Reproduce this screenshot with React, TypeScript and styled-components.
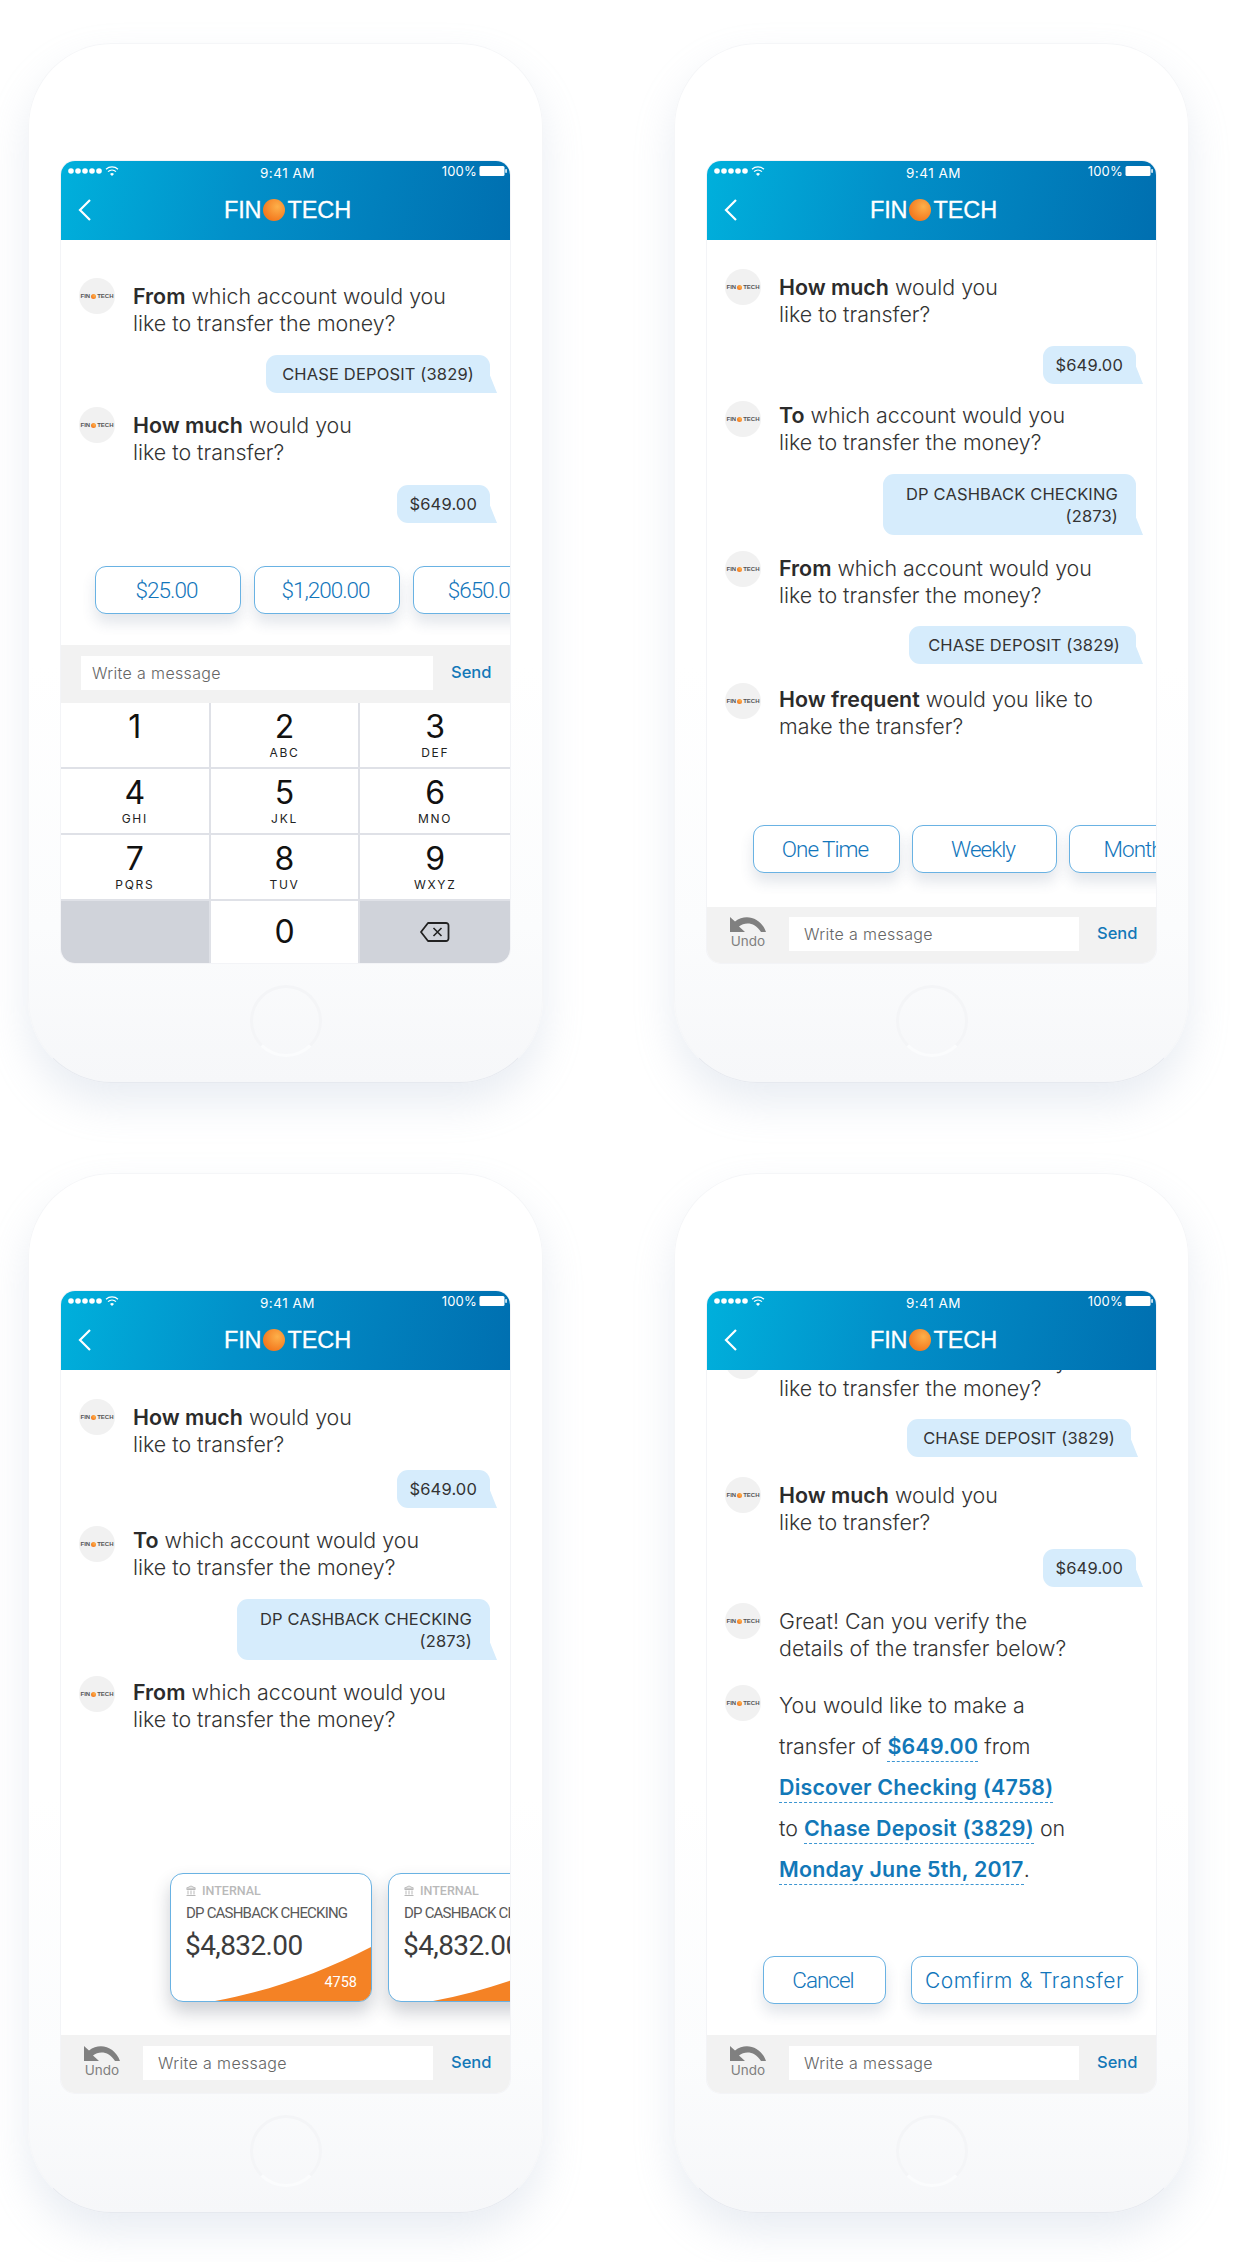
import React from "react";
import styled, { createGlobalStyle } from "styled-components";

const Global = createGlobalStyle`
  html, body { margin: 0; padding: 0; background: #fff; }
  body { font-family: Inter, "Noto Sans", sans-serif; color: #333; }
  * { box-sizing: border-box; }
`;

const Page = styled.main`
  width: 1242px;
  height: 2262px;
  padding: 43px 0 0 28px;
  display: grid;
  grid-template-columns: 515px 515px;
  grid-auto-rows: 1040px;
  column-gap: 131px;
  row-gap: 90px;
  overflow: hidden;
`;

const Phone = styled.article`
  width: 515px;
  height: 1040px;
  padding: 117px 32px 0;
  border-radius: 84px;
  background: linear-gradient(#fff 0, #fff 60%, #fbfcfd 85%, #f6f7f9 100%);
  border: 1px solid #f5f6f8;
  border-bottom-color: #e6e9ef;
  box-shadow: 0 20px 40px rgba(165, 178, 205, 0.24);
  display: flex;
  flex-direction: column;
  align-items: stretch;
`;

const Screen = styled.section`
  height: 802px;
  flex: none;
  border-radius: 14px;
  overflow: hidden;
  background: #fff;
  display: flex;
  flex-direction: column;
  box-shadow: 0 0 0 1px #f3f4f7;
`;

const HomeButton = styled.div`
  width: 72px;
  height: 72px;
  margin: 22px auto 0;
  border-radius: 50%;
  border: 3px solid #f4f5f7;
  border-bottom-color: #fbfcfd;
`;

const Header = styled.header`
  height: 79px;
  flex: none;
  color: #fff;
  background: linear-gradient(102deg, #00b0dc 0%, #0290c9 40%, #006fb0 100%);
  padding: 0 3px 0 7px;
`;

const StatusBar = styled.div`
  height: 24px;
  display: grid;
  grid-template-columns: 1fr auto 1fr;
  align-items: center;
  font-size: 13.5px;
  letter-spacing: 0.5px;
`;

const StatusLeft = styled.div`
  display: flex;
  align-items: center;
  padding-bottom: 4px;
`;

const StatusRight = styled.div`
  display: flex;
  align-items: center;
  justify-content: flex-end;
  gap: 2px;
  padding-bottom: 4px;
  font-size: 13px;
  letter-spacing: 0.2px;
`;

const TitleRow = styled.div`
  height: 50px;
  display: grid;
  grid-template-columns: 1fr auto 1fr;
  align-items: center;
`;

const BackLink = styled.div`
  padding-left: 9px;
  display: flex;
  align-items: center;
`;

const Brand = styled.div<{ $small?: boolean }>`
  display: flex;
  align-items: center;
  font-family: "Liberation Sans", Arial, sans-serif;
  font-size: ${(p) => (p.$small ? "6px" : "23.5px")};
  font-weight: ${(p) => (p.$small ? 700 : 400)};
  color: ${(p) => (p.$small ? "#555" : "#fff")};
  letter-spacing: ${(p) => (p.$small ? "0" : "-0.1px")};
  -webkit-text-stroke: ${(p) => (p.$small ? "0" : "0.3px #fff")};
`;

const Sphere = styled.span<{ $small?: boolean }>`
  width: ${(p) => (p.$small ? "5px" : "22px")};
  height: ${(p) => (p.$small ? "5px" : "22px")};
  margin: 0 ${(p) => (p.$small ? "1px" : "2px")};
  border-radius: 50%;
  background: radial-gradient(circle at 65% 35%, #fdb04a, #f47b20 70%);
`;

const Chat = styled.div`
  flex: 1;
  min-height: 0;
  overflow: hidden;
  display: flex;
  flex-direction: column;
`;

const Thread = styled.div<{ $top: number }>`
  margin-top: ${(p) => p.$top}px;
  flex: none;
  display: flex;
  flex-direction: column;
`;

const Message = styled.div<{ $gap?: number }>`
  display: flex;
  align-items: flex-start;
  padding-left: 18px;
  margin-top: ${(p) => p.$gap ?? 0}px;
`;

const Avatar = styled.div`
  width: 36px;
  height: 36px;
  flex: none;
  border-radius: 50%;
  background: #f1f1f1;
  display: flex;
  align-items: center;
  justify-content: center;
`;

const MessageText = styled.p<{ $pad?: number }>`
  margin: 0 0 0 18px;
  padding-top: ${(p) => p.$pad ?? 5}px;
  font-size: 21.4px;
  line-height: 27px;
  font-weight: 300;
  color: #333;
  b { font-weight: 600; color: #2b2b2b; }
`;

const SummaryText = styled.p`
  margin: 0 0 0 18px;
  font-size: 21.4px;
  line-height: 41px;
  font-weight: 300;
  color: #333;
`;

const Detail = styled.span`
  font-weight: 600;
  letter-spacing: 0.2px;
  color: #1278b8;
  padding-bottom: 2px;
  border-bottom: 1.5px dashed #3c96d2;
`;

const Bubble = styled.div<{ $gap: number; $pad?: number; $wide?: boolean; $inset?: number }>`
  position: relative;
  align-self: flex-end;
  margin-top: ${(p) => p.$gap}px;
  margin-right: ${(p) => p.$inset ?? 20}px;
  padding: ${(p) => (p.$wide ? "9px 18px 8px 23px" : `0 ${Math.min(p.$pad ?? 16, 16)}px 0 ${p.$pad ?? 16}px`)};
  min-height: 38px;
  display: flex;
  align-items: center;
  text-align: right;
  background: #d6ecfc;
  border-radius: 11px 11px 0 11px;
  font-size: 16.5px;
  line-height: 22px;
  letter-spacing: 0.15px;
  color: #333;
  &::after {
    content: "";
    position: absolute;
    right: -7px;
    bottom: 0;
    width: 8px;
    height: 20px;
    background: #d6ecfc;
    clip-path: polygon(0 0, 100% 100%, 0 100%);
  }
`;

const Actions = styled.div<{ $left: number; $bottom: number; $gap: number }>`
  margin-top: auto;
  flex: none;
  display: flex;
  gap: ${(p) => p.$gap}px;
  padding: 0 0 ${(p) => p.$bottom}px ${(p) => p.$left}px;
`;

const Option = styled.button<{ $width: number; $loose?: boolean }>`
  width: ${(p) => p.$width}px;
  height: 48px;
  flex: none;
  background: #fff;
  border: 1.5px solid #69b2e3;
  border-radius: 11px;
  box-shadow: 0 9px 14px rgba(60, 80, 110, 0.14);
  font-family: ${(p) => (p.$loose ? "Inter" : "Roboto")}, sans-serif;
  font-size: ${(p) => (p.$loose ? "21px" : "22.5px")};
  font-weight: 300;
  letter-spacing: ${(p) => (p.$loose ? "0.5px" : "-1px")};
  color: #1276bb;
  padding: 0 ${(p) => (p.$loose ? "0" : "3px")} 0 0;
  white-space: nowrap;
  overflow: hidden;
`;

const AccountCard = styled.div`
  position: relative;
  width: 202px;
  height: 129px;
  flex: none;
  padding: 9px 15px 0;
  border: 1.5px solid #69b2e3;
  border-radius: 13px;
  background: #fff;
  overflow: hidden;
  font-family: Roboto, sans-serif;
  box-shadow: 0 10px 18px rgba(40, 50, 70, 0.24);
`;

const CardKind = styled.div`
  display: flex;
  align-items: center;
  gap: 6px;
  font-size: 12.5px;
  font-weight: 500;
  color: #b9b9b9;
  line-height: 16px;
`;

const CardName = styled.div`
  margin-top: 4px;
  font-size: 15px;
  line-height: 20px;
  letter-spacing: -0.8px;
  color: #5a5a5a;
  white-space: nowrap;
`;

const CardAmount = styled.div`
  margin-top: 5px;
  margin-left: -1px;
  font-size: 28px;
  line-height: 36px;
  letter-spacing: -0.6px;
  color: #3c3c3c;
  white-space: nowrap;
`;

const CardWedge = styled.svg`
  position: absolute;
  right: 0;
  bottom: 0;
`;

const CardNumber = styled.span`
  position: absolute;
  right: 14px;
  bottom: 10px;
  font-size: 14.5px;
  color: #fff;
`;

const Composer = styled.div<{ $short?: boolean }>`
  height: ${(p) => (p.$short ? "56px" : "58px")};
  flex: none;
  background: #f2f2f2;
  display: flex;
  align-items: flex-start;
  padding: ${(p) => (p.$short ? "10px" : "11px")} 19px 0 20px;
`;

const Undo = styled.div`
  width: 38px;
  margin: -1px 22px 0 2px;
  flex: none;
  display: flex;
  flex-direction: column;
  align-items: center;
  font-size: 13.5px;
  line-height: 17px;
  color: #808080;
`;

const Input = styled.div<{ $tight?: boolean }>`
  flex: 1;
  height: 34px;
  background: #fff;
  padding-left: ${(p) => (p.$tight ? "11px" : "15px")};
  padding-bottom: ${(p) => (p.$tight ? "1px" : "0")};
  display: flex;
  align-items: center;
  font-size: 16px;
  font-weight: 300;
  letter-spacing: 0.35px;
  color: #666;
`;

const Send = styled.div`
  width: 40px;
  margin-left: 18px;
  flex: none;
  height: 32px;
  display: flex;
  align-items: center;
  font-size: 16.5px;
  font-weight: 500;
  color: #1278b8;
`;

const Keypad = styled.div`
  flex: none;
  height: 260px;
  display: grid;
  grid-template-columns: repeat(3, 1fr);
  grid-template-rows: 65.5px 66.5px 65.5px 1fr;
  background: #fff;
`;

const Key = styled.div<{ $gray?: boolean; $col: number; $row: number }>`
  display: flex;
  flex-direction: column;
  align-items: center;
  justify-content: ${(p) => (p.$row === 3 ? "center" : "flex-start")};
  background: ${(p) => (p.$gray ? "#d0d3da" : "#fff")};
  border-right: ${(p) => (p.$col < 2 ? "2px solid #dfe1e7" : "none")};
  border-bottom: ${(p) => (p.$row < 3 ? "2px solid #dfe1e7" : "none")};
  padding-top: ${(p) => (p.$row === 3 ? "0" : "5px")};
`;

const Digit = styled.span`
  font-size: 32px;
  line-height: 38px;
  font-weight: 400;
  color: #111;
`;

const Letters = styled.span`
  font-size: 12px;
  line-height: 14px;
  letter-spacing: 1.7px;
  color: #222;
`;

const StatusDots = () => (
  <svg width="52" height="14" viewBox="0 0 52 14" fill="#fff">
    {[3, 10, 17, 24, 31].map((x) => (
      <circle key={x} cx={x} cy="7" r="2.8" />
    ))}
    <path d="M38 5.2a9 9 0 0 1 12 0" fill="none" stroke="#fff" strokeWidth="1.2" />
    <path d="M40 7.6a6 6 0 0 1 8 0" fill="none" stroke="#fff" strokeWidth="1.2" />
    <path d="M42 10a3 3 0 0 1 4 0L44 12z" />
  </svg>
);

const Battery = () => (
  <svg width="28" height="12" viewBox="0 0 28 12">
    <rect x="0.5" y="1" width="25" height="10" rx="1.5" fill="#fff" />
    <rect x="26.3" y="4" width="1.5" height="4" rx="0.7" fill="#fff" />
  </svg>
);

const Chevron = () => (
  <svg width="15" height="24" viewBox="0 0 15 24" fill="none" stroke="#fff" strokeWidth="2.2">
    <path d="M13 2 3 12l10 10" />
  </svg>
);

const UndoIcon = () => (
  <svg width="36" height="17" viewBox="0 0 36 17" fill="#808080">
    <path d="M0 1v15h15l-6-5.6C15 5.8 25 6 31 16h5C31 2 16-3 5 5.6z" />
  </svg>
);

const BankIcon = () => (
  <svg width="10" height="12" viewBox="0 0 10 12" fill="none" stroke="#b9b9b9" strokeWidth="1">
    <path d="M0.5 3.2 5 1l4.5 2.2zM0.5 4.5h9M2 5.5v4M5 5.5v4M8 5.5v4M0.5 10.5h9" />
  </svg>
);

const Backspace = () => (
  <svg width="30" height="22" viewBox="0 0 30 22" fill="none" stroke="#222" strokeWidth="1.8" strokeLinejoin="round">
    <path d="M8 2h18a2.5 2.5 0 0 1 2.5 2.5v13a2.5 2.5 0 0 1-2.5 2.5H8l-7-9z" />
    <path d="m13.5 7 8 8m0-8-8 8" strokeWidth="1.6" />
  </svg>
);

const AppHeader = () => (
  <Header>
    <StatusBar>
      <StatusLeft>
        <StatusDots />
      </StatusLeft>
      <span>9:41 AM</span>
      <StatusRight>
        100%
        <Battery />
      </StatusRight>
    </StatusBar>
    <TitleRow>
      <BackLink>
        <Chevron />
      </BackLink>
      <Brand>
        FIN
        <Sphere />
        TECH
      </Brand>
    </TitleRow>
  </Header>
);

const Logo = () => (
  <Avatar>
    <Brand $small>
      FIN
      <Sphere $small />
      TECH
    </Brand>
  </Avatar>
);

const Ask = ({ gap, pad, children }: { gap?: number; pad?: number; children: React.ReactNode }) => (
  <Message $gap={gap}>
    <Logo />
    <MessageText $pad={pad}>{children}</MessageText>
  </Message>
);

const Bar = ({ undo = true, short }: { undo?: boolean; short?: boolean }) => (
  <Composer $short={short}>
    {undo && (
      <Undo>
        <UndoIcon />
        Undo
      </Undo>
    )}
    <Input $tight={!undo}>Write a message</Input>
    <Send>Send</Send>
  </Composer>
);

const Q = {
  from: (
    <>
      <b>From</b> which account would you
      <br />
      like to transfer the money?
    </>
  ),
  much: (
    <>
      <b>How much</b> would you
      <br />
      like to transfer?
    </>
  ),
  to: (
    <>
      <b>To</b> which account would you
      <br />
      like to transfer the money?
    </>
  ),
  freq: (
    <>
      <b>How frequent</b> would you like to
      <br />
      make the transfer?
    </>
  ),
  great: (
    <>
      Great! Can you verify the
      <br />
      details of the transfer below?
    </>
  ),
};

const keys = [
  ["1", ""],
  ["2", "ABC"],
  ["3", "DEF"],
  ["4", "GHI"],
  ["5", "JKL"],
  ["6", "MNO"],
  ["7", "PQRS"],
  ["8", "TUV"],
  ["9", "WXYZ"],
];

const Card = () => (
  <AccountCard>
    <CardKind>
      <BankIcon />
      INTERNAL
    </CardKind>
    <CardName>DP CASHBACK CHECKING</CardName>
    <CardAmount>$4,832.00</CardAmount>
    <CardWedge width="156" height="54" viewBox="0 0 156 54">
      <path d="M0 54C55 44 105 26 156 0V54Z" fill="#f48225" />
    </CardWedge>
    <CardNumber>4758</CardNumber>
  </AccountCard>
);

export default function App() {
  return (
    <Page>
      <Global />
      <Phone>
        <Screen>
          <AppHeader />
          <Chat>
            <Thread $top={38}>
              <Ask>{Q.from}</Ask>
              <Bubble $gap={18}>CHASE DEPOSIT (3829)</Bubble>
              <Ask gap={14}>{Q.much}</Ask>
              <Bubble $gap={19} $pad={13}>$649.00</Bubble>
            </Thread>
            <Actions $left={34} $bottom={31} $gap={13}>
              <Option $width={146}>$25.00</Option>
              <Option $width={146}>$1,200.00</Option>
              <Option $width={146}>$650.00</Option>
            </Actions>
          </Chat>
          <Bar undo={false} />
          <Keypad>
            {keys.map(([d, l], i) => (
              <Key key={d} $col={i % 3} $row={Math.floor(i / 3)}>
                <Digit>{d}</Digit>
                <Letters>{l}</Letters>
              </Key>
            ))}
            <Key $gray $col={0} $row={3} />
            <Key $col={1} $row={3}>
              <Digit>0</Digit>
            </Key>
            <Key $gray $col={2} $row={3}>
              <Backspace />
            </Key>
          </Keypad>
        </Screen>
        <HomeButton />
      </Phone>

      <Phone>
        <Screen>
          <AppHeader />
          <Chat>
            <Thread $top={29}>
              <Ask>{Q.much}</Ask>
              <Bubble $gap={18} $pad={13}>$649.00</Bubble>
              <Ask gap={17} pad={1}>{Q.to}</Ask>
              <Bubble $gap={18} $wide>
                DP CASHBACK CHECKING
                <br />
                (2873)
              </Bubble>
              <Ask gap={16} pad={4}>{Q.from}</Ask>
              <Bubble $gap={17} $pad={19}>CHASE DEPOSIT (3829)</Bubble>
              <Ask gap={19} pad={3}>{Q.freq}</Ask>
            </Thread>
            <Actions $left={46} $bottom={34} $gap={12}>
              <Option $width={147}>One Time</Option>
              <Option $width={145}>Weekly</Option>
              <Option $width={145}>Monthly</Option>
            </Actions>
          </Chat>
          <Bar short />
        </Screen>
        <HomeButton />
      </Phone>

      <Phone>
        <Screen>
          <AppHeader />
          <Chat>
            <Thread $top={29}>
              <Ask>{Q.much}</Ask>
              <Bubble $gap={12} $pad={13}>$649.00</Bubble>
              <Ask gap={18} pad={1}>{Q.to}</Ask>
              <Bubble $gap={18} $wide>
                DP CASHBACK CHECKING
                <br />
                (2873)
              </Bubble>
              <Ask gap={16} pad={3}>{Q.from}</Ask>
            </Thread>
            <Actions $left={109} $bottom={33} $gap={16}>
              <Card />
              <Card />
            </Actions>
          </Chat>
          <Bar />
        </Screen>
        <HomeButton />
      </Phone>

      <Phone>
        <Screen>
          <AppHeader />
          <Chat>
            <Thread $top={-27}>
              <Ask>{Q.from}</Ask>
              <Bubble $gap={17} $inset={25}>
                CHASE DEPOSIT (3829)
              </Bubble>
              <Ask gap={20}>{Q.much}</Ask>
              <Bubble $gap={13} $pad={13}>$649.00</Bubble>
              <Ask gap={16}>{Q.great}</Ask>
              <Message $gap={23}>
                <Logo />
                <SummaryText>
                  You would like to make a
                  <br />
                  transfer of <Detail>$649.00</Detail> from
                  <br />
                  <Detail>Discover Checking (4758)</Detail>
                  <br />
                  to <Detail>Chase Deposit (3829)</Detail> on
                  <br />
                  <Detail>Monday June 5th, 2017</Detail>.
                </SummaryText>
              </Message>
            </Thread>
            <Actions $left={56} $bottom={31} $gap={25}>
              <Option $width={123}>Cancel</Option>
              <Option $width={227} $loose>
                Comfirm &amp; Transfer
              </Option>
            </Actions>
          </Chat>
          <Bar />
        </Screen>
        <HomeButton />
      </Phone>
    </Page>
  );
}
